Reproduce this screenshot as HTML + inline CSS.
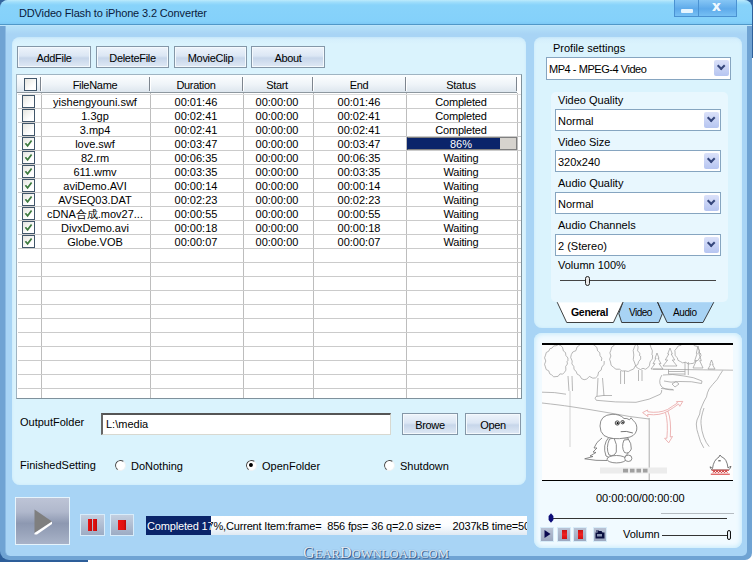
<!DOCTYPE html>
<html>
<head>
<meta charset="utf-8">
<title>DDVideo Flash to iPhone 3.2 Converter</title>
<style>
*{box-sizing:border-box;margin:0;padding:0}
html,body{width:753px;height:562px;overflow:hidden;background:#fff}
body{font-family:"Liberation Sans",sans-serif;font-size:11px;color:#000;position:relative}
.abs{position:absolute}
#win{position:absolute;left:0;top:0;width:752px;height:560px;background:#6fa3d3;border-radius:8px 8px 7px 9px;overflow:hidden}
#body{position:absolute;left:5px;top:25px;width:742px;height:531px;background:linear-gradient(#b4e0f8 0,#b4e0f8 2px,#a8d4f5 9px,#a8d4f5);border-radius:0 0 5px 5px;border-left:1px solid #8bbbe4}
#title{position:absolute;left:0;top:0;width:752px;height:26px;background:linear-gradient(#bdebfc 0,#a0defb 2px,#88d3fa 5px,#84d1fa 21px,#7dc9f5 24px,#4f98c8 24px,#4f98c8 25px,#bde5fb 25px,#bde5fb 26px)}
#title .txt{position:absolute;left:19px;top:7px;font-size:11px;color:#0a1a3c;letter-spacing:-0.14px;white-space:nowrap}
.wbtn{position:absolute;top:0;height:17px;background:linear-gradient(#86c6f5,#5eaaea 55%,#76c0f4);border:1px solid #4a92d2;border-top:none}
.panel{position:absolute;background:linear-gradient(#c6e6f9 0,#d5effc 2px,#daf3fd 7px,#daf3fd);border-radius:8px;box-shadow:inset 0 0 3px #c6e8fa}
.btn{position:absolute;height:22px;border:1px solid #8497a8;background:linear-gradient(#eef4fb 0,#dbe6f4 45%,#c7d6ea 55%,#dfe9f5 100%);text-align:center;line-height:22px;font-size:11px;white-space:nowrap;letter-spacing:-0.3px;box-shadow:inset 0 0 0 1px #f4f9fd}
.lbl{position:absolute;white-space:nowrap;font-size:11px;line-height:13px}
.combo{position:absolute;height:22px;background:#fff;border:1px solid #86a5c0;font-size:11px;line-height:22px;padding-left:2px;white-space:nowrap}
.combo i{position:absolute;right:1px;top:2px;width:15px;height:16px;background:linear-gradient(#dbe1f9,#b6c5f1);border-radius:2px}
.combo i:after{content:"";position:absolute;left:4.2px;top:2.6px;width:4.4px;height:4.4px;border-right:2.2px solid #36477c;border-bottom:2.2px solid #36477c;transform:rotate(45deg)}
/* table */
#tbl{position:absolute;left:16px;top:74px;width:506px;height:325px;background:#fff;border:1px solid #7f919c;border-top-color:#9fb4c2;border-left-color:#9fb4c2;overflow:hidden}
#tbl .hdr{position:absolute;left:-1px;top:0;width:500px;height:18px;background:linear-gradient(#fcfeff,#eff4f8 55%,#dde6ee);border-bottom:1px solid #8d979f}
.hc{position:absolute;top:1px;height:18px;line-height:18px;text-align:center;font-size:11px;letter-spacing:-0.3px}
.hs{position:absolute;top:2px;width:1px;height:14px;background:#7d858e;box-shadow:1px 0 0 #fff}
.vl{position:absolute;top:18px;width:1px;height:306px;background:#bdbdbd}
.hl{position:absolute;left:0;width:504px;height:1px;background:#cbcbcb}
.row{position:absolute;left:0;width:502px;height:14px;line-height:14px;font-size:11px}
.row span{position:absolute;top:1px;text-align:center;white-space:nowrap}
.cb{position:absolute;left:4px;top:1px;width:13px;height:13px;border:1px solid #41566a;background:linear-gradient(135deg,#e6e6e0,#fff 70%)}
.sb{position:absolute;top:527px;width:14px;height:15px;border:1px solid #d6ebf8;background:linear-gradient(#b9c2d4,#9ca8c0)}
.radio{position:absolute;width:11px;height:11px;border-radius:50%;border:1.5px solid #4c4c4c;border-right-color:#eef2f4;border-bottom-color:#eef2f4;background:#fff;transform:rotate(-8deg)}
.radio.on:after{content:"";position:absolute;left:2px;top:2px;width:4px;height:4px;border-radius:50%;background:#000}
</style>
</head>
<body>
<div class="abs" style="left:0;top:0;width:12px;height:12px;background:#35679f"></div><div class="abs" style="left:741px;top:0;width:12px;height:58px;background:#2f619b"></div><div class="abs" style="left:0;top:548px;width:88px;height:14px;background:#2d5e99"></div>
<div id="win">
  <div id="body"></div>
  <div id="title">
    <div class="txt">DDVideo Flash to iPhone 3.2 Converter</div>
    <div class="wbtn" style="left:674px;width:25px"><div class="abs" style="left:6px;top:9px;width:12px;height:4px;background:#e6f5ff;border-radius:1px"></div></div>
    <div class="wbtn" style="left:698px;width:39px"><div class="abs" style="left:13px;top:-2px;font-size:15px;line-height:15px;font-weight:bold;color:#eef8ff;text-shadow:0.5px 0 0 #eef8ff">x</div></div>
  </div>

  <!-- left main panel -->
  <div class="panel" style="left:12px;top:37px;width:514px;height:448px"></div>
  <div class="btn" style="left:17px;top:46px;width:74px">AddFile</div>
  <div class="btn" style="left:96px;top:46px;width:73px">DeleteFile</div>
  <div class="btn" style="left:174px;top:46px;width:73px">MovieClip</div>
  <div class="btn" style="left:251px;top:46px;width:74px">About</div>

  <div id="tbl"><div class="abs" style="left:1px;top:0;width:504px;height:325px">
    <div class="hdr">
      <div class="cb" style="left:7px;top:3px;width:13px;height:13px"></div>
      <div class="hc" style="left:23px;width:110px">FileName</div>
      <div class="hc" style="left:133px;width:92px">Duration</div>
      <div class="hc" style="left:225px;width:70px">Start</div>
      <div class="hc" style="left:295px;width:94px">End</div>
      <div class="hc" style="left:389px;width:110px">Status</div>
      <div class="hs" style="left:23px"></div><div class="hs" style="left:132px"></div><div class="hs" style="left:225px"></div><div class="hs" style="left:295px"></div><div class="hs" style="left:388px"></div><div class="hs" style="left:499px"></div>
    </div>
    <div class="vl" style="left:23px"></div><div class="vl" style="left:132px"></div><div class="vl" style="left:225px"></div><div class="vl" style="left:295px"></div><div class="vl" style="left:388px"></div><div class="vl" style="left:499px"></div>
    <div id="rows">
<div class="hl" style="top:19px;background:#dedede"></div>
<div class="hl" style="top:33px"></div>
<div class="hl" style="top:47px"></div>
<div class="hl" style="top:61px"></div>
<div class="hl" style="top:75px"></div>
<div class="hl" style="top:89px"></div>
<div class="hl" style="top:103px"></div>
<div class="hl" style="top:117px"></div>
<div class="hl" style="top:131px"></div>
<div class="hl" style="top:145px"></div>
<div class="hl" style="top:159px"></div>
<div class="hl" style="top:173px"></div>
<div class="hl" style="top:187px"></div>
<div class="hl" style="top:201px"></div>
<div class="hl" style="top:215px"></div>
<div class="hl" style="top:229px"></div>
<div class="hl" style="top:243px"></div>
<div class="hl" style="top:257px"></div>
<div class="hl" style="top:271px"></div>
<div class="hl" style="top:285px"></div>
<div class="hl" style="top:299px"></div>
<div class="hl" style="top:313px"></div>
<div class="row" style="top:19px"><div class="cb"></div><span style="left:22px;width:110px">yishengyouni.swf</span><span style="left:132px;width:92px">00:01:46</span><span style="left:224px;width:70px">00:00:00</span><span style="left:294px;width:94px">00:01:46</span><span style="left:388px;width:110px;letter-spacing:-0.2px">Completed</span></div>
<div class="row" style="top:33px"><div class="cb"></div><span style="left:22px;width:110px">1.3gp</span><span style="left:132px;width:92px">00:02:41</span><span style="left:224px;width:70px">00:00:00</span><span style="left:294px;width:94px">00:02:41</span><span style="left:388px;width:110px;letter-spacing:-0.2px">Completed</span></div>
<div class="row" style="top:47px"><div class="cb"></div><span style="left:22px;width:110px">3.mp4</span><span style="left:132px;width:92px">00:02:41</span><span style="left:224px;width:70px">00:00:00</span><span style="left:294px;width:94px">00:02:41</span><span style="left:388px;width:110px;letter-spacing:-0.2px">Completed</span></div>
<div class="row" style="top:61px"><div class="cb on"><svg width="11" height="11" viewBox="0 0 11 11" style="position:absolute;left:0;top:0"><path d="M2.4 5.2 L4.6 7.8 L8.6 2.6" stroke="#3d7a3e" stroke-width="1.7" fill="none"/></svg></div><span style="left:22px;width:110px">love.swf</span><span style="left:132px;width:92px">00:03:47</span><span style="left:224px;width:70px">00:00:00</span><span style="left:294px;width:94px">00:03:47</span><div class="abs" style="left:389px;top:1px;width:110px;height:13px;background:#d6d3ce;border:1px solid #808080;border-left-color:#0a246a"><div class="abs" style="left:0;top:0;width:92px;height:11px;background:#0a246a"></div><span style="left:0;width:106px;top:0px;color:#fff;line-height:13px">86%</span></div></div>
<div class="row" style="top:75px"><div class="cb on"><svg width="11" height="11" viewBox="0 0 11 11" style="position:absolute;left:0;top:0"><path d="M2.4 5.2 L4.6 7.8 L8.6 2.6" stroke="#3d7a3e" stroke-width="1.7" fill="none"/></svg></div><span style="left:22px;width:110px">82.rm</span><span style="left:132px;width:92px">00:06:35</span><span style="left:224px;width:70px">00:00:00</span><span style="left:294px;width:94px">00:06:35</span><span style="left:388px;width:110px;letter-spacing:-0.2px">Waiting</span></div>
<div class="row" style="top:89px"><div class="cb on"><svg width="11" height="11" viewBox="0 0 11 11" style="position:absolute;left:0;top:0"><path d="M2.4 5.2 L4.6 7.8 L8.6 2.6" stroke="#3d7a3e" stroke-width="1.7" fill="none"/></svg></div><span style="left:22px;width:110px">611.wmv</span><span style="left:132px;width:92px">00:03:35</span><span style="left:224px;width:70px">00:00:00</span><span style="left:294px;width:94px">00:03:35</span><span style="left:388px;width:110px;letter-spacing:-0.2px">Waiting</span></div>
<div class="row" style="top:103px"><div class="cb on"><svg width="11" height="11" viewBox="0 0 11 11" style="position:absolute;left:0;top:0"><path d="M2.4 5.2 L4.6 7.8 L8.6 2.6" stroke="#3d7a3e" stroke-width="1.7" fill="none"/></svg></div><span style="left:22px;width:110px">aviDemo.AVI</span><span style="left:132px;width:92px">00:00:14</span><span style="left:224px;width:70px">00:00:00</span><span style="left:294px;width:94px">00:00:14</span><span style="left:388px;width:110px;letter-spacing:-0.2px">Waiting</span></div>
<div class="row" style="top:117px"><div class="cb on"><svg width="11" height="11" viewBox="0 0 11 11" style="position:absolute;left:0;top:0"><path d="M2.4 5.2 L4.6 7.8 L8.6 2.6" stroke="#3d7a3e" stroke-width="1.7" fill="none"/></svg></div><span style="left:22px;width:110px">AVSEQ03.DAT</span><span style="left:132px;width:92px">00:02:23</span><span style="left:224px;width:70px">00:00:00</span><span style="left:294px;width:94px">00:02:23</span><span style="left:388px;width:110px;letter-spacing:-0.2px">Waiting</span></div>
<div class="row" style="top:131px"><div class="cb on"><svg width="11" height="11" viewBox="0 0 11 11" style="position:absolute;left:0;top:0"><path d="M2.4 5.2 L4.6 7.8 L8.6 2.6" stroke="#3d7a3e" stroke-width="1.7" fill="none"/></svg></div><span style="left:22px;width:110px">cDNA合成.mov27...</span><span style="left:132px;width:92px">00:00:55</span><span style="left:224px;width:70px">00:00:00</span><span style="left:294px;width:94px">00:00:55</span><span style="left:388px;width:110px;letter-spacing:-0.2px">Waiting</span></div>
<div class="row" style="top:145px"><div class="cb on"><svg width="11" height="11" viewBox="0 0 11 11" style="position:absolute;left:0;top:0"><path d="M2.4 5.2 L4.6 7.8 L8.6 2.6" stroke="#3d7a3e" stroke-width="1.7" fill="none"/></svg></div><span style="left:22px;width:110px">DivxDemo.avi</span><span style="left:132px;width:92px">00:00:18</span><span style="left:224px;width:70px">00:00:00</span><span style="left:294px;width:94px">00:00:18</span><span style="left:388px;width:110px;letter-spacing:-0.2px">Waiting</span></div>
<div class="row" style="top:159px"><div class="cb on"><svg width="11" height="11" viewBox="0 0 11 11" style="position:absolute;left:0;top:0"><path d="M2.4 5.2 L4.6 7.8 L8.6 2.6" stroke="#3d7a3e" stroke-width="1.7" fill="none"/></svg></div><span style="left:22px;width:110px">Globe.VOB</span><span style="left:132px;width:92px">00:00:07</span><span style="left:224px;width:70px">00:00:00</span><span style="left:294px;width:94px">00:00:07</span><span style="left:388px;width:110px;letter-spacing:-0.2px">Waiting</span></div>
</div>
  </div></div>

  <div class="lbl" style="left:20px;top:416px">OutputFolder</div>
  <div class="abs" style="left:101px;top:413px;width:290px;height:22px;background:#fff;border:1px solid #d8d8d0;border-top:2px solid #555;border-left:2px solid #666;font-size:11px;line-height:19px;padding-left:3px">L:\media</div>
  <div class="btn" style="left:402px;top:413px;width:56px">Browe</div>
  <div class="btn" style="left:465px;top:413px;width:56px">Open</div>

  <div class="lbl" style="left:20px;top:459px">FinishedSetting</div>
  <div class="radio" style="left:115px;top:460px"></div><div class="lbl" style="left:131px;top:460px">DoNothing</div>
  <div class="radio on" style="left:246px;top:460px"></div><div class="lbl" style="left:262px;top:460px">OpenFolder</div>
  <div class="radio" style="left:384px;top:460px"></div><div class="lbl" style="left:400px;top:460px">Shutdown</div>

  <!-- bottom controls -->
  <div class="abs" style="left:15px;top:497px;width:55px;height:48px;border:1px solid #e6f4fc;background:linear-gradient(#bdc4d6 0,#b0b8cc 30%,#8d98b1 55%,#98a3ba 75%,#a9b3c8 100%)">
    <svg class="abs" style="left:18px;top:11px" width="19" height="26" viewBox="0 0 19 26"><path d="M0.5 0.5 L18 12.5 L0.5 24 Z" fill="#7f7f7f"/><path d="M0.5 24 L18 12.5 L18 15 L3 25.5 L0.5 25.5Z" fill="#fff"/></svg>
  </div>
  <div class="abs" style="left:80px;top:514px;width:25px;height:22px;border:1px solid #d8ecfa;background:linear-gradient(#c3cfe0,#9dacc4)"><div class="abs" style="left:7px;top:4px;width:4px;height:12px;background:linear-gradient(90deg,#ee1414,#c00a0a)"></div><div class="abs" style="left:12px;top:4px;width:4px;height:12px;background:linear-gradient(90deg,#ee1414,#c00a0a)"></div></div>
  <div class="abs" style="left:110px;top:514px;width:24px;height:22px;border:1px solid #d8ecfa;background:linear-gradient(#c3cfe0,#9dacc4)"><div class="abs" style="left:7px;top:5px;width:8px;height:10px;background:linear-gradient(90deg,#ee1414,#e01010 70%,#b80808)"></div></div>

  <div class="abs" style="left:146px;top:516px;width:381px;height:19px;background:linear-gradient(#fff 0,#fbfdff 50%,#dfe9f3 100%);overflow:hidden;white-space:pre;font-size:11px;line-height:20px;letter-spacing:-0.17px">
    <div class="abs" style="left:1px;top:0;color:#000">Completed 17%,Current Item:frame=  856 fps= 36 q=2.0 size=    2037kB time=50</div>
    <div class="abs" style="left:0;top:0;width:65px;height:19px;background:#0a246a;overflow:hidden"><div class="abs" style="left:1px;top:0;color:#fff">Completed 17%,Current Item:frame=</div></div>
  </div>

  <!-- right settings panel -->
  <div class="panel" style="left:534px;top:37px;width:208px;height:291px"></div>
  <div class="lbl" style="left:553px;top:42px">Profile settings</div>
  <div class="combo" style="left:546px;top:57px;width:185px;height:23px;line-height:23px"><span style="letter-spacing:-0.45px">MP4 - MPEG-4 Video</span><i></i></div>
  <div class="abs" style="left:551px;top:92px;width:177px;height:210px;background:#e8f7fe;border-radius:5px"></div>
  <div class="lbl" style="left:558px;top:94px">Video Quality</div>
  <div class="combo" style="left:555px;top:109px;width:166px">Normal<i></i></div>
  <div class="lbl" style="left:558px;top:136px">Video Size</div>
  <div class="combo" style="left:555px;top:150px;width:166px">320x240<i></i></div>
  <div class="lbl" style="left:558px;top:177px">Audio Quality</div>
  <div class="combo" style="left:555px;top:192px;width:166px">Normal<i></i></div>
  <div class="lbl" style="left:558px;top:219px">Audio Channels</div>
  <div class="combo" style="left:555px;top:234px;width:166px">2 (Stereo)<i></i></div>
  <div class="lbl" style="left:558px;top:259px">Volumn 100%</div>
  <div class="abs" style="left:560px;top:280px;width:156px;height:1px;background:#444"></div>
  <div class="abs" style="left:585px;top:276px;width:5px;height:10px;border:1px solid #222;border-radius:2.5px;background:#e8e8e8"></div>
  <svg class="abs" style="left:554px;top:301px" width="165" height="24" viewBox="0 0 165 24">
    <path d="M103.6 1.2 L159.8 1.2 L149 21.5 L113.1 21.5 Z" fill="#a8d3f4"/>
    <path d="M68.9 1.2 L103.6 1.2 L108.4 12.6 L104.8 21.5 L67.7 21.5 L64.8 12.6 Z" fill="#a8d3f4"/>
    <path d="M159.8 1.2 L149 21.5 L113.1 21.5 L103.6 1.2 M103.6 1.2 L108.4 12.6 L104.8 21.5 L67.7 21.5 L64.8 12.6 L68.9 1.2" fill="none" stroke="#2a2a2a" stroke-width="0.9"/>
    <path d="M3.2 1.2 L68.9 1.2 L59.4 21.5 L12.7 21.5 Z" fill="#fff"/>
    <path d="M68.9 1.2 L59.4 21.5 L12.7 21.5 L3.2 1.2" fill="none" stroke="#2a2a2a" stroke-width="0.9"/>
  </svg>
  <div class="lbl" style="left:571px;top:306px;font-weight:bold;font-size:10.5px;letter-spacing:-0.3px">General</div>
  <div class="lbl" style="left:629px;top:306px;font-size:10px;letter-spacing:-0.5px">Video</div>
  <div class="lbl" style="left:673px;top:306px;font-size:10px;letter-spacing:-0.4px">Audio</div>

  <!-- preview panel -->
  <div class="panel" style="left:534px;top:333px;width:208px;height:215px;background:#f1faff;box-shadow:inset 0 0 5px 1px #c4eafb"></div>
  <div class="abs" id="vid" style="left:542px;top:343px;width:191px;height:138px;background:#fdfdfd;border-top:2px solid #000;border-bottom:1px solid #000;overflow:hidden"><svg class="abs" style="left:0;top:0" width="191" height="135" viewBox="542 345 191 135">
<path d="M567.0 361.0 Q568.5 364.3 565.7 366.4 Q566.7 370.9 564.4 372.4 Q563.2 375.1 559.9 373.9 Q558.3 377.4 556.0 376.6 Q553.6 377.9 551.7 374.9 Q549.3 374.8 548.7 370.8 Q545.4 370.3 545.4 366.9 Q543.5 364.6 545.8 361.0 Q543.5 357.5 545.5 355.2 Q545.5 351.7 548.7 351.2 Q549.4 347.7 552.0 348.1 Q553.7 344.8 556.0 345.8 Q558.7 343.5 560.7 345.6 Q563.0 346.3 563.4 351.0 Q566.3 351.8 565.9 355.5 Q569.0 357.7 567.9 361.0" stroke="#9a9a9a" stroke-width="0.7" fill="none"/>
<path d="M568 376 L569 391 M572 376 L572.5 391" stroke="#9a9a9a" stroke-width="0.7" fill="none"/>
<path d="M604.2 361.0 Q605.2 364.5 601.8 367.1 Q602.1 370.7 598.6 372.0 Q598.4 376.7 595.6 377.9 Q593.2 379.2 589.4 376.4 Q586.7 380.2 584.1 379.7 Q581.2 379.7 579.6 375.4 Q576.6 375.1 576.1 371.3 Q573.1 370.1 573.8 366.4 Q570.8 364.1 572.2 361.0 Q569.6 357.3 571.3 354.6 Q571.8 351.4 576.0 350.6 Q576.3 346.3 579.1 345.5 Q581.0 342.3 584.2 343.2 Q586.9 341.5 589.6 344.3 Q592.9 342.9 594.8 345.7 Q597.5 346.5 597.6 350.9 Q600.7 352.1 600.0 355.6 Q602.9 357.9 601.4 361.0" stroke="#9a9a9a" stroke-width="0.7" fill="none"/>
<path d="M598 378 L597 396 M602.5 378 L604 396" stroke="#9a9a9a" stroke-width="0.7" fill="none"/>
<path d="M640.6 356.0 Q641.8 359.2 638.6 361.6 Q638.7 365.1 635.1 366.1 Q634.2 370.0 630.9 370.1 Q628.4 372.6 625.0 370.8 Q621.8 372.2 619.5 369.2 Q615.3 370.1 613.6 367.4 Q610.2 365.9 610.5 362.0 Q608.5 359.5 610.9 356.0 Q608.8 352.6 610.9 350.2 Q610.8 346.5 614.3 345.3 Q615.3 341.3 618.7 340.9 Q621.4 338.4 625.0 340.2 Q628.1 339.3 630.4 342.8 Q634.9 341.7 636.8 344.2 Q639.0 346.2 637.6 350.8 Q640.8 353.0 639.7 356.0" stroke="#9a9a9a" stroke-width="0.7" fill="none"/>
<path d="M620.6 371 L620.6 384 M624.5 371 L624.5 384" stroke="#9a9a9a" stroke-width="0.7" fill="none"/>
<path d="M652.6 355.0 Q653.4 359.3 650.1 361.9 Q649.9 366.8 647.5 368.0 Q645.6 370.3 643.0 368.3 Q640.3 370.6 638.3 368.5 Q635.4 367.6 634.7 363.0 Q632.3 359.9 633.8 355.0 Q632.2 350.0 634.5 346.8 Q635.4 342.8 638.7 342.6 Q640.5 338.8 643.0 339.3 Q645.6 338.3 647.6 341.7 Q650.4 342.6 650.9 347.4 Q653.4 350.3 651.9 355.0" stroke="#9a9a9a" stroke-width="0.7" fill="none"/>
<path d="M638.5 370 L638.5 381 M642 370 L642 381" stroke="#9a9a9a" stroke-width="0.7" fill="none"/>
<path d="M657.0 353.0 L659.0 358.3 L658.0 358.3 L661.0 363.7 L659.0 363.7 L663.0 369.0 L651.0 369.0 L655.0 363.7 L653.0 363.7 L656.0 358.3 L655.0 358.3 Z" stroke="#9a9a9a" stroke-width="0.7" fill="none"/>
<path d="M670.0 348.0 L672.3 354.0 L671.2 354.0 L674.7 360.0 L672.3 360.0 L677.0 366.0 L663.0 366.0 L667.7 360.0 L665.3 360.0 L668.8 354.0 L667.7 354.0 Z" stroke="#9a9a9a" stroke-width="0.7" fill="none"/>
<path d="M700.4 353.0 Q702.1 356.0 699.5 358.0 Q699.1 360.9 695.1 361.2 Q693.9 364.4 690.7 363.6 Q688.2 365.1 685.7 362.2 Q682.0 363.8 680.5 361.6 Q677.1 361.0 677.3 357.7 Q674.0 355.8 675.1 353.0 Q673.8 350.1 676.8 348.1 Q677.2 345.4 681.2 345.2 Q682.3 342.2 685.5 343.0 Q688.1 340.5 690.7 342.3 Q693.5 342.1 694.3 345.7 Q698.1 345.8 698.3 348.5 Q700.6 350.3 698.6 353.0" stroke="#9a9a9a" stroke-width="0.7" fill="none"/>
<path d="M685 362 L685 375 M688.3 362 L688.3 375" stroke="#9a9a9a" stroke-width="0.7" fill="none"/>
<path d="M698.0 346.0 L699.7 353.3 L698.8 353.3 L701.3 360.7 L699.7 360.7 L703.0 368.0 L693.0 368.0 L696.3 360.7 L694.7 360.7 L697.2 353.3 L696.3 353.3 Z" stroke="#9a9a9a" stroke-width="0.7" fill="none"/>
<path d="M711.5 360.0 L713.2 364.5 L712.4 364.5 L715.0 369.0 L708.0 369.0 L710.6 364.5 L709.8 364.5 Z" stroke="#9a9a9a" stroke-width="0.7" fill="none"/>
<path d="M653 369.2 L733 370.2" stroke="#9a9a9a" stroke-width="0.7" fill="none"/>
<path d="M668.5 369.5 L668.5 374 L684.8 374 M668.5 371.5 L684.8 371.5" stroke="#9a9a9a" stroke-width="0.7" fill="none"/>
<path d="M662 375 Q658 381 661 386 Q664 390 674 390 M661 388.5 L673 389.5 M663 375 Q672 373.5 684 376 Q694 377 702 381 L701.5 383.5 Q692 381 680 381.5 Q670 383 664 381 M672 384 L676 381.5 L679 384 L675 387 Z" stroke="#9a9a9a" stroke-width="0.7" fill="none"/>
<path d="M542 392.2 Q555 392 566 394.2" stroke="#9a9a9a" stroke-width="0.7" fill="none"/>
<path d="M542 403 Q560 405 570 406.5 Q590 409.5 610 413 Q630 417 649 419" stroke="#9a9a9a" stroke-width="0.7" fill="none"/>
<path d="M596.3 400.3 Q615 402.5 636 402.3 Q650 400 660.4 394.2 Q662 392 661.7 390" stroke="#9a9a9a" stroke-width="0.7" fill="none"/>
<path d="M596.3 400.3 Q594 398 596 396.5 Q602 395 612 395.5" stroke="#9a9a9a" stroke-width="0.7" fill="none"/>
<path d="M570 391 L570 447" stroke="#b8b8b8" stroke-width="0.6" fill="none"/>
<path d="M649.2 418 L649.2 480" stroke="#8a8a8a" stroke-width="0.7" fill="none"/>
<path d="M722.7 370.5 Q719 376 717.3 379.3 Q712 385 709.2 388.8 Q707 393 706.5 396.9 Q704 401 702.4 405 Q699.5 411 699.7 414 Q696 421 696.3 424 Q696.5 430 698.3 434.4 Q700 442 703.8 447.9" stroke="#9a9a9a" stroke-width="0.7" fill="none"/>
<path d="M704 408 Q700.5 418 701 423.6 Q701.5 431 703.8 437.1 Q706 443 709.2 446.6" stroke="#9a9a9a" stroke-width="0.7" fill="none"/>
<path d="M602 438 Q596 442 594 448 L597 448 L593 452 L596 452.5 L590 456 L593 456.5 L584.7 458.8 Q596 461 607 460.5" stroke="#6e6e6e" stroke-width="0.8" fill="#fff"/>
<path d="M609 437 Q602 445 606 456 Q612 460 624 458 Q633 450 628 438 Z" stroke="#6e6e6e" stroke-width="0.8" fill="#fff"/>
<ellipse cx="616.5" cy="459.2" rx="9.5" ry="3.7" stroke="#6e6e6e" stroke-width="0.8" fill="#fff"/>
<ellipse cx="628.3" cy="458.3" rx="3.6" ry="3.2" stroke="#6e6e6e" stroke-width="0.8" fill="#fff"/>
<path d="M609.5 439 Q605.5 448 609 455 Q614 457 616.3 452 Q617.5 444 614 438 Z" stroke="#6e6e6e" stroke-width="0.8" fill="#fff"/>
<path d="M624 440 Q621 447 624.5 452.5 Q629 454.5 631.3 449 Q631.5 443 628.5 439.5 Z" stroke="#6e6e6e" stroke-width="0.8" fill="#fff"/>
<path d="M600 426 Q600 415 612 414.3 Q620 414 624 418.5 Q627 418 629.5 419.8 L631 417.8 L633.5 420.8 Q637.5 424 636.7 430 Q635 437 626 437.8 Q612 440.5 604 435.5 Q600 432 600 426 Z" stroke="#6e6e6e" stroke-width="0.8" fill="#fff"/>
<circle cx="617.3" cy="423" r="2.1" fill="#fff" stroke="#222" stroke-width="0.8"/><circle cx="617.6" cy="423.2" r="1.1" fill="#111"/>
<circle cx="622.6" cy="422.2" r="1.7" fill="#fff" stroke="#222" stroke-width="0.8"/><circle cx="622.9" cy="422.4" r="0.8" fill="#111"/>
<path d="M620.7 431.7 Q626 430.5 632.9 433" stroke="#555" stroke-width="0.8" fill="none"/>
<path d="M647.5 410 L642.6 412.6 L648 416.6 L647.6 414.4 Q660 416 668 411 Q674 407.5 678.5 404 L679.8 406.3 L682.8 401.4 L676.5 401.6 L677.5 403 Q672 406.5 667.5 409.5 Q659 413.5 647.8 411.8 Z" stroke="#e9a3a3" stroke-width="0.8" fill="none"/>
<path d="M667.8 411 Q671.5 420 670.3 437 L672.5 436.5 L668.7 442.8 L664.6 438.3 L666.9 438.2 Q668.3 422 665.5 412.5" stroke="#e9a3a3" stroke-width="0.8" fill="none"/>
<rect x="600" y="467.5" width="67" height="6" fill="#ececec"/>
<path d="M623 468.8h5v3.6h-5z M630 468.8h4.5v3.6h-4.5z M636.5 468.8h4.5v3.6h-4.5z M643 468.8h4.5v3.6h-4.5z" fill="#8d8d8d" opacity="0.8"/>
<path d="M712.5 468.5 Q713.5 460 719 457 L720 455 L721.2 456.6 Q727 458.5 728 468 Q729.5 466.8 731 466.3 Q730.5 469 728.5 470 L712 470 Q710.5 468.5 710 466.8 Q711.5 467.3 712.5 468.5 Z" stroke="#444" stroke-width="0.7" fill="#fff"/>
<path d="M718.3 460.8 h2.4" stroke="#222" stroke-width="0.9"/>
<path d="M711.5 470.2 L729 470.2 M713 472.8 L714 470.8 L715.5 472.8 L717 470.8 L718.5 472.8 L720 470.8 L721.5 472.8 L723 470.8 L724.5 472.8 L726 470.8 L727.5 472.8" stroke="#d22a2a" stroke-width="0.9" fill="none"/>
<path d="M710.8 474.2 L729.8 474.2" stroke="#d22a2a" stroke-width="1"/>
</svg></div>
  <div class="lbl" style="left:596px;top:492px">00:00:00/00:00:00</div>
  <div class="abs" style="left:552px;top:518px;width:175px;height:1px;background:#333"></div>
  <div class="abs" style="left:661px;top:513px;width:73px;height:1px;background:#b5bcc2"></div>
  <svg class="abs" style="left:548px;top:513px" width="6" height="10" viewBox="0 0 6 10"><path d="M3 0.3 L5.4 3 L5.4 7 L3 9.7 L0.6 7 L0.6 3 Z" fill="#0c0c78"/></svg>
  <div class="sb" style="left:540px"><svg width="12" height="12" viewBox="0 0 12 12"><path d="M3.5 2 L9.5 6 L3.5 10 Z" fill="#0a0a50"/></svg></div>
  <div class="sb" style="left:557px"><div class="abs" style="left:4px;top:2px;width:5px;height:9px;background:linear-gradient(#c81414,#f02020 50%,#d01010)"></div></div>
  <div class="sb" style="left:573px"><div class="abs" style="left:4px;top:2px;width:5px;height:9px;background:linear-gradient(#c81414,#f02020 50%,#d01010)"></div></div>
  <div class="sb" style="left:593px"><svg width="12" height="12" viewBox="0 0 12 12"><path d="M1.5 4.5h2l1-1.5h3l1 1.5h2v6h-9z M2 2.5h3v1h-3z" fill="#0a1040"/><rect x="3" y="6" width="5" height="2.5" fill="#8a96b4"/></svg></div>
  <div class="lbl" style="left:623px;top:528px">Volumn</div>
  <div class="abs" style="left:662px;top:535px;width:66px;height:1px;background:#333"></div>
  <div class="abs" style="left:727px;top:530px;width:4px;height:10px;border:1px solid #111;border-radius:2px;background:#e8eef2"></div>
</div>
<div class="abs" style="left:303px;top:544px;font-family:'Liberation Serif',serif;font-size:16px;line-height:18px;color:#dfeaf5;text-shadow:1px 1px 0 #3d5c88,0 0 1px #6585ad;white-space:nowrap;letter-spacing:0.1px">G<span style="font-size:12.5px">EAR</span>D<span style="font-size:12.5px">OWNLOAD.COM</span></div>
</body>
</html>
